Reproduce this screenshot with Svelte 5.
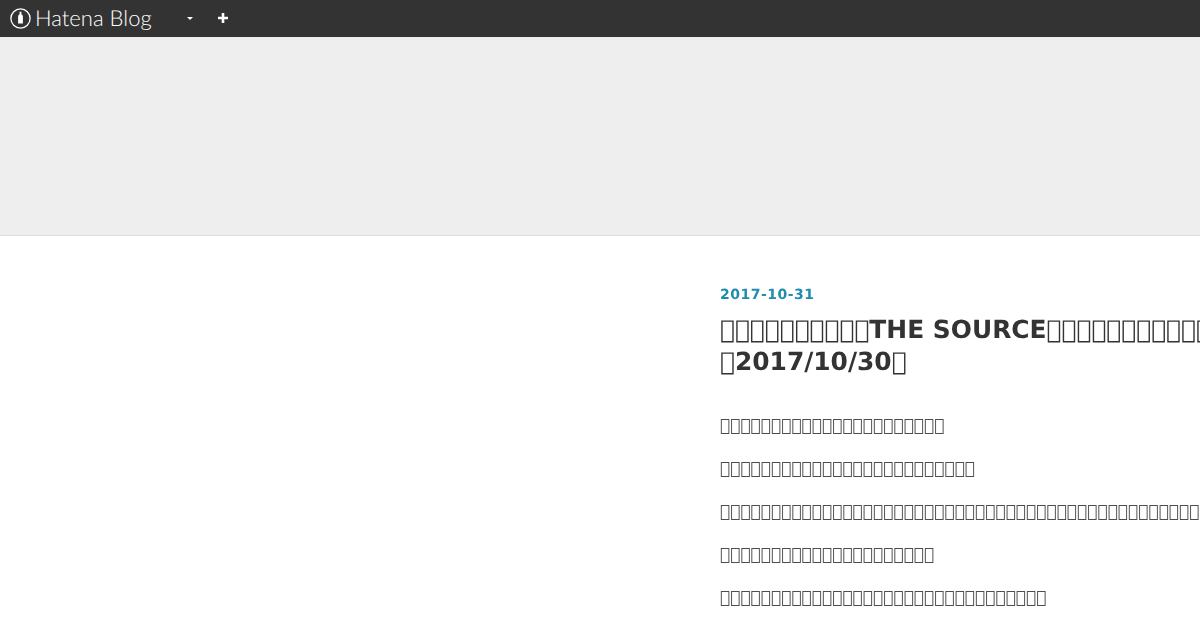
<script>
	// the reference shows missing-glyph boxes, so the unreadable text stays as private-use characters
	const box = (n) => '\uE000'.repeat(n);
	const paragraphs = [box(22), box(25), box(110), box(21), box(32)];
</script>

<div class="page">
	<header class="bar">
		<a class="logo" href="#top">
			<svg width="21" height="21" viewBox="0 0 21 21" aria-hidden="true">
				<circle cx="10.500" cy="10.500" r="9.600" fill="none" stroke="#fff" stroke-width="1.300" />
				<path d="M9.600 3.800h1.800v2.400c1 .6 1.500 1.400 1.500 2.400v7H8.100v-7c0-1 .5-1.800 1.500-2.400z" fill="#fff" />
			</svg>
			<span class="logo-text">Hatena Blog</span>
		</a>
		<span class="caret"></span>
		<svg class="plus" width="10" height="10" viewBox="0 0 10 10" aria-hidden="true">
			<path d="M3.700 0h2.600v3.700H10v2.600H6.300V10H3.700V6.300H0V3.700h3.700z" fill="#fff" />
		</svg>
	</header>

	<div class="blog-header"></div>

	<main class="content">
		<article class="entry">
			<time class="date">2017-10-31</time>
			<h1 class="title">{box(10)}THE SOURCE{box(20)}<br />{box(1)}2017/10/30{box(1)}</h1>
			<div class="body">
				{#each paragraphs as p}
					<p>{p}</p>
				{/each}
			</div>
		</article>
	</main>
</div>

<style>
	:global(body) {
		background: #fff;
		overflow: hidden;
	}

	.page {
		width: 1200px;
		height: 630px;
		overflow: hidden;
		font-family: "DejaVu Sans", sans-serif;
		text-rendering: geometricPrecision;
	}

	.bar {
		height: 37px;
		background: #333;
		display: flex;
		align-items: center;
		padding-left: 10px;
	}

	.logo {
		display: flex;
		align-items: center;
		gap: 4px;
		width: 177px;
		margin-bottom: 1px;
		color: #fff;
		text-decoration: none;
	}

	.logo-text {
		font-family: Lato, sans-serif;
		font-weight: 300;
		font-size: 22px;
		letter-spacing: 0.02px;
		line-height: 20px;
		white-space: nowrap;
	}

	.caret {
		width: 0;
		height: 0;
		border-left: 3px solid transparent;
		border-right: 3px solid transparent;
		border-top: 3px solid #fff;
	}

	.plus {
		margin-left: 25px;
		margin-bottom: 1px;
	}

	.blog-header {
		height: 198px;
		background: #eee;
		border-bottom: 1px solid #ddd;
	}

	.content {
		padding: 51px 0 0 720px;
	}

	.entry {
		width: 720px;
		will-change: transform;
	}

	.date {
		display: block;
		font-size: 14px;
		font-weight: 700;
		letter-spacing: 0.5px;
		line-height: 16px;
		color: #1f8cb0;
	}

	.title {
		margin: 11px 0 0;
		font-size: 24.9px;
		font-weight: 700;
		line-height: 32px;
		color: #333;
		white-space: nowrap;
	}

	.body {
		margin-top: 34px;
		font-size: 17px;
		line-height: 29px;
		color: #4d4d4d;
	}

	.body p {
		margin: 0 0 14px;
		white-space: nowrap;
	}
</style>
